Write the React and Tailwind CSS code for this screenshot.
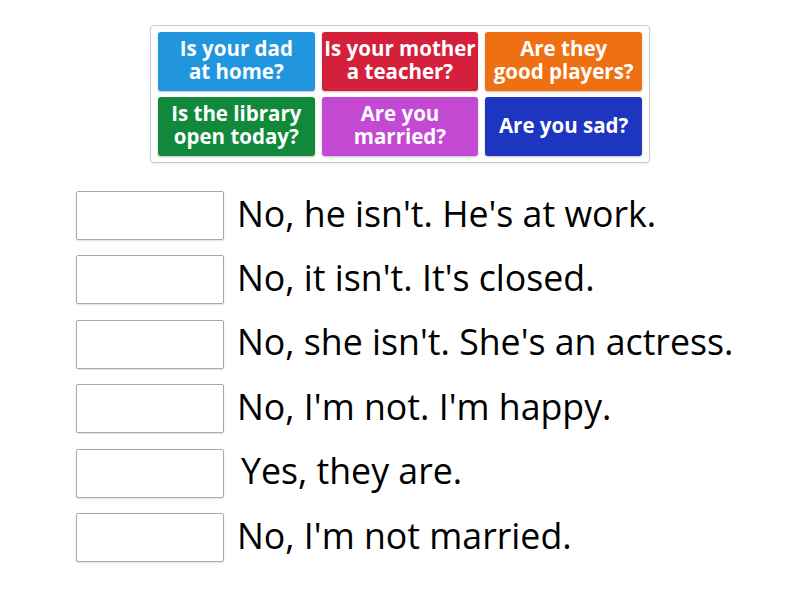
import React from "react";

const QUESTIONS = [
  { text: ["Is your dad", "at home?"], color: "bg-[#2196df]" },
  { text: ["Is your mother", "a teacher?"], color: "bg-[#d5203c]" },
  { text: ["Are they", "good players?"], color: "bg-[#ef7012]" },
  { text: ["Is the library", "open today?"], color: "bg-[#10893a]" },
  { text: ["Are you", "married?"], color: "bg-[#c348d2]" },
  { text: ["Are you sad?"], color: "bg-[#1d35c0]" },
];

const ANSWERS = [
  { text: "No, he isn't. He's at work." },
  { text: "No, it isn't. It's closed." },
  { text: "No, she isn't. She's an actress." },
  { text: "No, I'm not. I'm happy." },
  { text: "Yes, they are.", shift: true },
  { text: "No, I'm not married." },
];

export default function App() {
  return (
    <div className="w-[800px] h-[600px] bg-white font-['Open_Sans',sans-serif] overflow-hidden">
      {/* Question tiles */}
      <div className="pt-[25px] flex justify-center">
        <div className="w-[500px] border border-[#c9c9c9] rounded-[4px] px-[7px] py-[6px] shadow-[0_1px_2px_rgba(0,0,0,0.08)]">
          <div className="grid grid-cols-3 gap-x-[7px] gap-y-[6px]">
            {QUESTIONS.map((q, i) => (
              <div
                key={i}
                className={`${q.color} h-[59px] rounded-[3px] flex flex-col items-center justify-center pb-[3px] text-white font-bold text-[20.5px] leading-[23px] text-center shadow-[0_1px_2px_rgba(0,0,0,0.25)]`}
              >
                {q.text.map((line, j) => (
                  <span key={j} className="block h-[23px] leading-[23px]">{line}</span>
                ))}
              </div>
            ))}
          </div>
        </div>
      </div>

      {/* Answer rows */}
      <div className="mt-[28px] ml-[76px] flex flex-col gap-[15.4px]">
        {ANSWERS.map((a, i) => (
          <div key={i} className="flex items-center gap-[13px]">
            <div className="w-[148px] h-[49px] shrink-0 border border-[#a9a9a9] rounded-[2px] bg-white shadow-[0_1px_2px_rgba(0,0,0,0.12)]" />
            <span className={`text-[35.7px] text-black whitespace-nowrap leading-none pb-[4px] ${a.shift ? "ml-[4px]" : ""}`}>
              {a.text}
            </span>
          </div>
        ))}
      </div>
    </div>
  );
}
